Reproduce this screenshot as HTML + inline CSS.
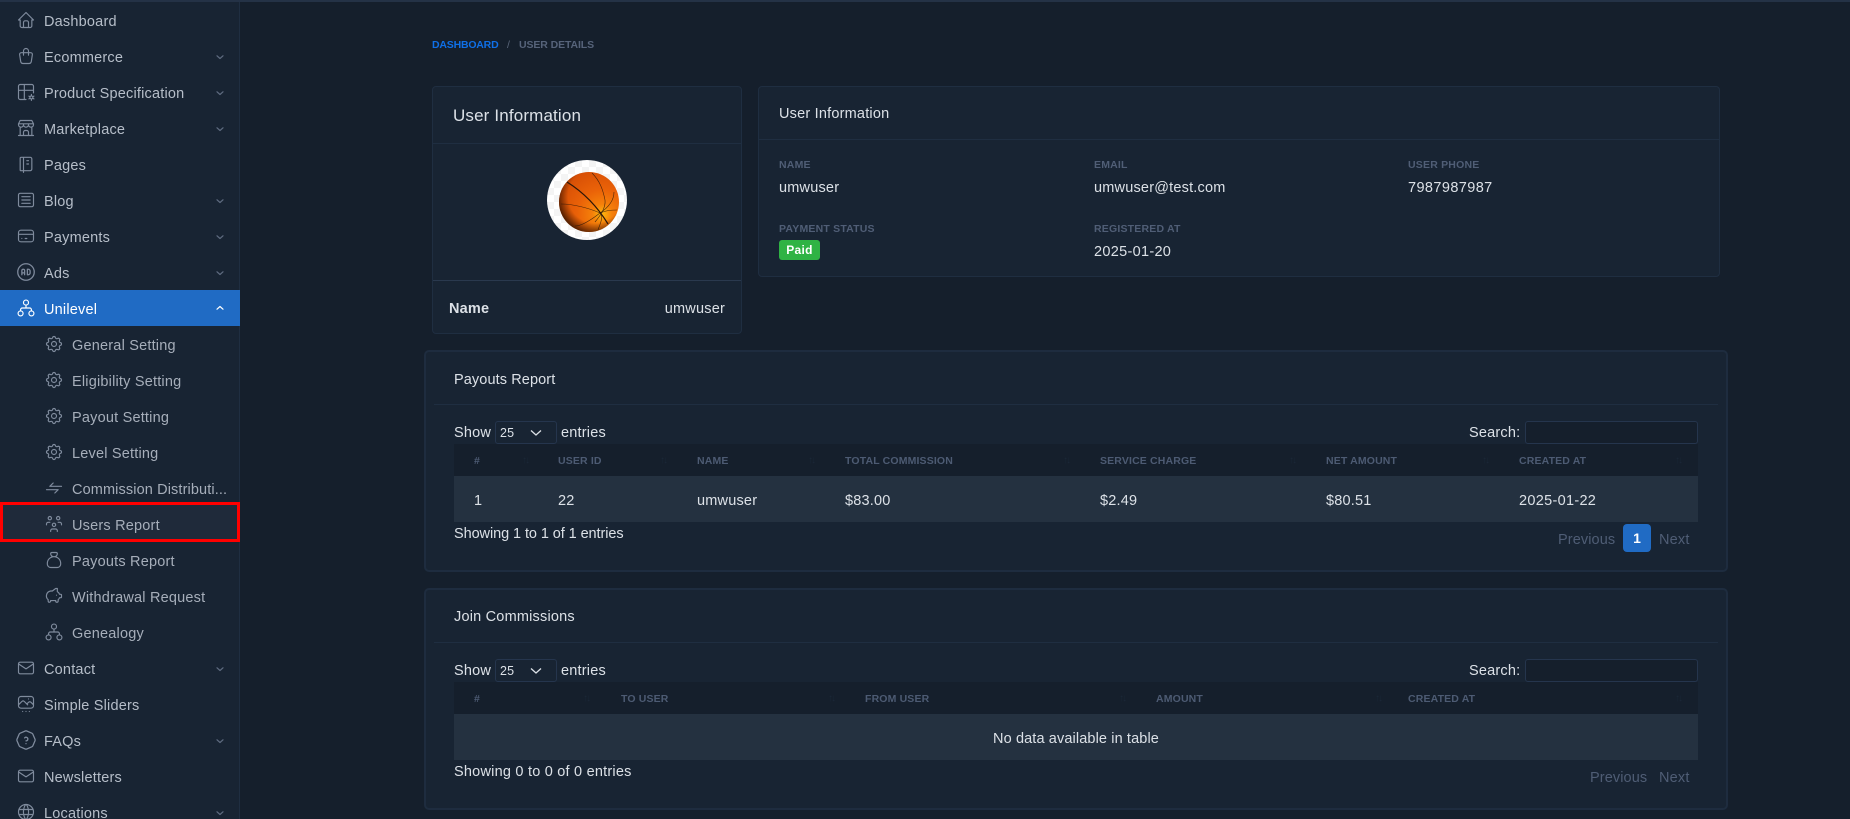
<!DOCTYPE html>
<html lang="en"><head><meta charset="utf-8"><title>User Details</title>
<style>
*{box-sizing:border-box;margin:0;padding:0}
html,body{width:1850px;height:819px;overflow:hidden;background:#151f2c}
body{font-family:"Liberation Sans",sans-serif;color:#dce1e7;font-size:14.5px;position:relative}
.a{position:absolute}
.t{position:absolute;white-space:nowrap;line-height:20px;height:20px;letter-spacing:.2px;margin-top:1px}
.side{position:absolute;left:0;top:0;width:240px;height:819px;background:#182433;border-right:1px solid #1f2e41}
.m{color:#b6bec9}.s{color:#a6aeba}
.ic{position:absolute;width:20px;height:20px;fill:none;stroke:#7f8b9d;stroke-width:1.4;stroke-linecap:round;stroke-linejoin:round}
.ch{position:absolute;left:215px;width:10px;height:10px;fill:none;stroke:#5e6b80;stroke-width:1.2;stroke-linecap:round;stroke-linejoin:round}
.card{position:absolute;background:#182433;border:1px solid #1f2e41;border-radius:4px}
.big{position:absolute;background:#182433;border:2px solid #1e2c3f;border-radius:5px}
.line{position:absolute;height:1px;background:#1f2e41}
.lab{position:absolute;white-space:nowrap;font-size:10.5px;line-height:14px;font-weight:bold;color:#505e76;letter-spacing:.2px;margin-top:1px}
.th{position:absolute;white-space:nowrap;font-size:10.5px;line-height:14px;font-weight:bold;color:#4d5b73;letter-spacing:.15px;margin-top:1px}
.so{position:absolute;white-space:nowrap;font-size:10px;line-height:14px;color:#1c2838;letter-spacing:-2px;margin-top:1px}
.box{position:absolute;border:1px solid #25354d;border-radius:3px}
.mut{color:#4f5d75}
</style></head><body>
<svg width="0" height="0" style="position:absolute"><defs>
<symbol id="gear" viewBox="0 0 24 24"><path d="M10.325 4.317c.426-1.756 2.924-1.756 3.35 0a1.724 1.724 0 0 0 2.573 1.066c1.543-.94 3.31.826 2.37 2.37a1.724 1.724 0 0 0 1.065 2.572c1.756.426 1.756 2.924 0 3.35a1.724 1.724 0 0 0-1.066 2.573c.94 1.543-.826 3.31-2.37 2.37a1.724 1.724 0 0 0-2.572 1.065c-.426 1.756-2.924 1.756-3.35 0a1.724 1.724 0 0 0-2.573-1.066c-1.543.94-3.31-.826-2.37-2.37a1.724 1.724 0 0 0-1.065-2.572c-1.756-.426-1.756-2.924 0-3.35a1.724 1.724 0 0 0 1.066-2.573c-.94-1.543.826-3.31 2.37-2.37c1 .608 2.296.07 2.572-1.065z"/><circle cx="12" cy="12" r="3"/></symbol>
<symbol id="down" viewBox="0 0 10 10"><path d="M2 3.800L5 6.500L8 3.800"/></symbol>
<symbol id="tree" viewBox="0 0 24 24"><circle cx="12" cy="5.500" r="3"/><circle cx="5.500" cy="18.500" r="3"/><circle cx="18.500" cy="18.500" r="3"/><path d="M12 8.500V12M5.500 15.500V14a2 2 0 0 1 2-2h9a2 2 0 0 1 2 2v1.500"/></symbol>
<symbol id="mail" viewBox="0 0 24 24"><path d="M3 7a2 2 0 0 1 2-2h14a2 2 0 0 1 2 2v10a2 2 0 0 1-2 2H5a2 2 0 0 1-2-2V7zM3 7l9 6l9-6"/></symbol>
</defs></svg>

<div class="a" style="left:0;top:0;width:1850px;height:2px;background:#243246;z-index:5"></div>

<div class="side">
<svg class="ic" style="left:16px;top:10px" viewBox="0 0 24 24"><path d="M5 12H3l9-9l9 9h-2M5 12v7a2 2 0 0 0 2 2h10a2 2 0 0 0 2-2v-7M9 21v-6a2 2 0 0 1 2-2h2a2 2 0 0 1 2 2v6"/></svg><div class="t m" style="left:44px;top:11px">Dashboard</div>
<svg class="ic" style="left:16px;top:46px" viewBox="0 0 24 24"><path d="M6.331 8H17.67a2 2 0 0 1 1.977 2.304l-1.255 8.152A3 3 0 0 1 15.426 21H8.574a3 3 0 0 1-2.965-2.544l-1.255-8.152A2 2 0 0 1 6.331 8zM9 11V6a3 3 0 0 1 6 0v5"/></svg><div class="t m" style="left:44px;top:47px">Ecommerce</div><svg class="ch" style="top:52px"><use href="#down"/></svg>
<svg class="ic" style="left:16px;top:82px" viewBox="0 0 24 24"><path d="M12 21H5a2 2 0 0 1-2-2V5a2 2 0 0 1 2-2h14a2 2 0 0 1 2 2v8M3 10h18M10 3v18"/><circle cx="18.500" cy="18.500" r="1.800"/><path d="M18.500 15v1.500M18.500 20.500V22M15.500 17l1.300.8M20.200 19.500l1.300.8M15.500 20.200l1.300-.8M20.200 17.700l1.300-.8"/></svg><div class="t m" style="left:44px;top:83px">Product Specification</div><svg class="ch" style="top:88px"><use href="#down"/></svg>
<svg class="ic" style="left:16px;top:118px" viewBox="0 0 24 24"><path d="M3 21h18M3 7v1a3 3 0 0 0 6 0V7m0 1a3 3 0 0 0 6 0V7m0 1a3 3 0 0 0 6 0V7H3l2-4h14l2 4M5 21V10.850M19 21V10.850M9 21v-4a2 2 0 0 1 2-2h2a2 2 0 0 1 2 2v4"/></svg><div class="t m" style="left:44px;top:119px">Marketplace</div><svg class="ch" style="top:124px"><use href="#down"/></svg>
<svg class="ic" style="left:16px;top:154px" viewBox="0 0 24 24"><path d="M6 4h11a2 2 0 0 1 2 2v12a2 2 0 0 1-2 2H6a1 1 0 0 1-1-1V5a1 1 0 0 1 1-1M9 4v18M13 8h2M13 12h2"/></svg><div class="t m" style="left:44px;top:155px">Pages</div>
<svg class="ic" style="left:16px;top:190px" viewBox="0 0 24 24"><path d="M5 4h14a2 2 0 0 1 2 2v12a2 2 0 0 1-2 2H5a2 2 0 0 1-2-2V6a2 2 0 0 1 2-2zM7 8h10M7 12h10M7 16h10"/></svg><div class="t m" style="left:44px;top:191px">Blog</div><svg class="ch" style="top:196px"><use href="#down"/></svg>
<svg class="ic" style="left:16px;top:226px" viewBox="0 0 24 24"><path d="M6 5h12a3 3 0 0 1 3 3v8a3 3 0 0 1-3 3H6a3 3 0 0 1-3-3V8a3 3 0 0 1 3-3zM3 10h18M7 15h.01M11 15h2"/></svg><div class="t m" style="left:44px;top:227px">Payments</div><svg class="ch" style="top:232px"><use href="#down"/></svg>
<svg class="ic" style="left:15px;top:261px;width:22px;height:22px" viewBox="0 0 24 24"><circle cx="12" cy="12" r="9"/><path d="M7.500 15v-4.500a1.500 1.500 0 0 1 3 0V15M7.500 13h3M13.500 9v6h1a2 2 0 0 0 2-2v-2a2 2 0 0 0-2-2z"/></svg><div class="t m" style="left:44px;top:263px">Ads</div><svg class="ch" style="top:268px"><use href="#down"/></svg>

<div class="a" style="left:0;top:290px;width:240px;height:36px;background:#206bc4"></div>
<svg class="ic" style="left:16px;top:298px;stroke:#fff" viewBox="0 0 24 24"><use href="#tree"/></svg><div class="t" style="left:44px;top:299px;color:#fff">Unilevel</div><svg class="ch" style="top:303px;stroke:#fff;transform:rotate(180deg)"><use href="#down"/></svg>

<svg class="ic" style="left:44px;top:334px" viewBox="0 0 24 24"><use href="#gear"/></svg><div class="t s" style="left:72px;top:335px">General Setting</div>
<svg class="ic" style="left:44px;top:370px" viewBox="0 0 24 24"><use href="#gear"/></svg><div class="t s" style="left:72px;top:371px">Eligibility Setting</div>
<svg class="ic" style="left:44px;top:406px" viewBox="0 0 24 24"><use href="#gear"/></svg><div class="t s" style="left:72px;top:407px">Payout Setting</div>
<svg class="ic" style="left:44px;top:442px" viewBox="0 0 24 24"><use href="#gear"/></svg><div class="t s" style="left:72px;top:443px">Level Setting</div>
<svg class="ic" style="left:44px;top:478px" viewBox="0 0 24 24"><path d="M21 10H7l4-4M3 14h14l-4 4"/></svg><div class="t s" style="left:72px;top:479px;letter-spacing:.12px">Commission Distributi...</div>

<div class="a" style="left:0;top:502px;width:240px;height:40px;background:#1f2a3a;border:3px solid #f00"></div>
<svg class="ic" style="left:44px;top:514px" viewBox="0 0 24 24"><path d="M10 13a2 2 0 1 0 4 0a2 2 0 0 0-4 0M8 21v-1a2 2 0 0 1 2-2h4a2 2 0 0 1 2 2v1M15 5a2 2 0 1 0 4 0a2 2 0 0 0-4 0M17 10h2a2 2 0 0 1 2 2v1M5 5a2 2 0 1 0 4 0a2 2 0 0 0-4 0M3 13v-1a2 2 0 0 1 2-2h2"/></svg><div class="t s" style="left:72px;top:515px">Users Report</div>
<svg class="ic" style="left:44px;top:550px" viewBox="0 0 24 24"><path d="M9.500 3h5a1.500 1.500 0 0 1 1.500 1.500a3.500 3.500 0 0 1-3.500 3.500h-1a3.500 3.500 0 0 1-3.500-3.500a1.500 1.500 0 0 1 1.500-1.500zM4 17v-1a8 8 0 1 1 16 0v1a4 4 0 0 1-4 4H8a4 4 0 0 1-4-4z"/></svg><div class="t s" style="left:72px;top:551px">Payouts Report</div>
<svg class="ic" style="left:44px;top:586px" viewBox="0 0 24 24"><path d="M15 11v.01M16 3v3.803a6.019 6.019 0 0 1 2.658 3.197h1.341a1 1 0 0 1 1 1v2a1 1 0 0 1-1 1h-1.342a6.008 6.008 0 0 1-1.658 2.473v1.527a1.500 1.500 0 0 1-3 0v-.583a6.040 6.040 0 0 1-1 .083h-4a6.040 6.040 0 0 1-1-.083v.583a1.500 1.500 0 0 1-3 0v-1.528a6 6 0 0 1 2.999-10.472h2.001l4-3z"/></svg><div class="t s" style="left:72px;top:587px">Withdrawal Request</div>
<svg class="ic" style="left:44px;top:622px" viewBox="0 0 24 24"><use href="#tree"/></svg><div class="t s" style="left:72px;top:623px">Genealogy</div>

<svg class="ic" style="left:16px;top:658px" viewBox="0 0 24 24"><use href="#mail"/></svg><div class="t m" style="left:44px;top:659px">Contact</div><svg class="ch" style="top:664px"><use href="#down"/></svg>
<svg class="ic" style="left:16px;top:694px" viewBox="0 0 24 24"><path d="M15 6h.01M6 3h12a3 3 0 0 1 3 3v8a3 3 0 0 1-3 3H6a3 3 0 0 1-3-3V6a3 3 0 0 1 3-3zM3 13l4-4a3 5 0 0 1 3 0l4 4M13 12l2-2a3 5 0 0 1 3 0l3 3M8 21h.01M12 21h.01M16 21h.01"/></svg><div class="t m" style="left:44px;top:695px">Simple Sliders</div>
<svg class="ic" style="left:15px;top:729px;width:22px;height:22px" viewBox="0 0 24 24"><path d="M12.802 2.165l5.575 2.389c.48.206.863.589 1.07 1.07l2.388 5.574c.22.512.22 1.092 0 1.604l-2.389 5.575c-.206.48-.589.863-1.07 1.07l-5.574 2.388c-.512.22-1.092.22-1.604 0l-5.575-2.389a2.036 2.036 0 0 1-1.07-1.07l-2.388-5.574a2.036 2.036 0 0 1 0-1.604l2.389-5.575c.206-.48.589-.863 1.07-1.07l5.574-2.388a2.036 2.036 0 0 1 1.604 0zM12 16v.01M12 13a2 2 0 0 0 .914-3.782a1.980 1.980 0 0 0-2.414.483"/></svg><div class="t m" style="left:44px;top:731px">FAQs</div><svg class="ch" style="top:736px"><use href="#down"/></svg>
<svg class="ic" style="left:16px;top:766px" viewBox="0 0 24 24"><use href="#mail"/></svg><div class="t m" style="left:44px;top:767px">Newsletters</div>
<svg class="ic" style="left:16px;top:802px" viewBox="0 0 24 24"><circle cx="12" cy="12" r="9"/><path d="M3.600 9h16.800M3.600 15h16.800M11.500 3a17 17 0 0 0 0 18M12.500 3a17 17 0 0 1 0 18"/></svg><div class="t m" style="left:44px;top:803px">Locations</div><svg class="ch" style="top:808px"><use href="#down"/></svg>
</div>

<div class="a" style="left:432px;top:38px;font-size:10.5px;line-height:14px;font-weight:bold;color:#0f6fe6;letter-spacing:-.2px;white-space:nowrap">DASHBOARD</div>
<div class="a" style="left:507px;top:38px;font-size:10.5px;line-height:14px;color:#5b677b">/</div>
<div class="a" style="left:519px;top:38px;font-size:10.5px;line-height:14px;font-weight:bold;color:#56637a;letter-spacing:-.1px;white-space:nowrap">USER DETAILS</div>

<!-- profile card -->
<div class="card" style="left:432px;top:86px;width:310px;height:248px"></div>
<div class="line" style="left:433px;top:143px;width:308px"></div>
<div class="t" style="left:453px;top:105px;font-size:17px;letter-spacing:.15px">User Information</div>
<div class="a" style="left:547px;top:160px;width:80px;height:80px;border-radius:50%;background:repeating-conic-gradient(#fff 0 25%,#f4f4f4 0 50%) 0 0/14px 14px"></div>
<svg class="a" style="left:559px;top:172px" width="60" height="60" viewBox="0 0 60 60">
<defs><radialGradient id="b" cx=".72" cy=".7" r=".75"><stop offset="0" stop-color="#fdb80e"/><stop offset=".22" stop-color="#f5800a"/><stop offset=".55" stop-color="#ea6208"/><stop offset="1" stop-color="#d85006"/></radialGradient>
<radialGradient id="d" cx=".6" cy=".4" r=".66"><stop offset=".68" stop-color="#3a1400" stop-opacity="0"/><stop offset="1" stop-color="#2a1000" stop-opacity=".9"/></radialGradient></defs>
<circle cx="30" cy="30" r="30" fill="url(#b)"/><circle cx="30" cy="30" r="30" fill="url(#d)"/>
<g fill="none" stroke="#2b1608" stroke-width=".6" stroke-opacity=".85"><path d="M8 10C24 20 38 34 49 52" stroke-width="1.200" stroke-opacity="1"/><path d="M33 1C41 9 44 18 46 28C47 36 41 44 36 50"/><path d="M55 20C55 28 50 35 41 41C32 48 22 54 16 54"/><path d="M2 32C14 32 30 36 41 41C45 46 40 54 39 58"/><path d="M41 41C48 38 53 38 58 38"/></g></svg>
<div class="a" style="left:433px;top:280px;width:308px;height:1px;background:#2a394e"></div>
<div class="t" style="left:449px;top:298px;font-weight:bold;font-size:14.5px">Name</div>
<div class="t" style="right:1125px;top:298px">umwuser</div>

<!-- details -->
<div class="card" style="left:758px;top:86px;width:962px;height:191px"></div>
<div class="line" style="left:759px;top:139px;width:960px"></div>
<div class="t" style="left:779px;top:103px;font-size:14.500px">User Information</div>
<div class="lab" style="left:779px;top:157px">NAME</div><div class="t" style="left:779px;top:177px">umwuser</div>
<div class="lab" style="left:1094px;top:157px">EMAIL</div><div class="t" style="left:1094px;top:177px">umwuser@test.com</div>
<div class="lab" style="left:1408px;top:157px">USER PHONE</div><div class="t" style="left:1408px;top:177px;letter-spacing:.4px">7987987987</div>
<div class="lab" style="left:779px;top:221px">PAYMENT STATUS</div>
<div class="a" style="left:779px;top:240px;width:41px;height:20px;background:#2fb344;border-radius:3px;color:#fff;font-weight:bold;font-size:12px;line-height:20px;text-align:center;letter-spacing:.3px">Paid</div>
<div class="lab" style="left:1094px;top:221px">REGISTERED AT</div><div class="t" style="left:1094px;top:241px;letter-spacing:.3px">2025-01-20</div>

<!-- payouts -->
<div class="big" style="left:424px;top:350px;width:1304px;height:222px"></div>
<div class="line" style="left:434px;top:404px;width:1284px"></div>
<div class="t" style="left:454px;top:369px;letter-spacing:.1px">Payouts Report</div>
<div class="t" style="left:454px;top:422px">Show</div>
<div class="box" style="left:495px;top:421px;width:62px;height:23px"></div>
<div class="t" style="left:500px;top:422px;font-size:12.500px">25</div>
<svg class="a" style="left:530px;top:427px;fill:none;stroke:#dce1e7;stroke-width:1.300" width="12" height="12" viewBox="0 0 12 12"><path d="M1 3.500L6 8L11 3.500"/></svg>
<div class="t" style="left:561px;top:422px">entries</div>
<div class="t" style="left:1469px;top:422px">Search:</div>
<div class="box" style="left:1525px;top:421px;width:173px;height:23px;background:#151f2c"></div>
<div class="a" style="left:454px;top:444px;width:1244px;height:32px;background:#151f2c"></div>
<div class="th" style="left:474px;top:453px">#</div>
<div class="th" style="left:558px;top:453px">USER ID</div>
<div class="th" style="left:697px;top:453px">NAME</div>
<div class="th" style="left:845px;top:453px">TOTAL COMMISSION</div>
<div class="th" style="left:1100px;top:453px">SERVICE CHARGE</div>
<div class="th" style="left:1326px;top:453px">NET AMOUNT</div>
<div class="th" style="left:1519px;top:453px">CREATED AT</div>
<div class="so" style="left:522px;top:453px">↑↓</div><div class="so" style="left:660px;top:453px">↑↓</div><div class="so" style="left:808px;top:453px">↑↓</div><div class="so" style="left:1063px;top:453px">↑↓</div><div class="so" style="left:1289px;top:453px">↑↓</div><div class="so" style="left:1482px;top:453px">↑↓</div><div class="so" style="left:1675px;top:453px">↑↓</div>
<div class="a" style="left:454px;top:476px;width:1244px;height:46px;background:#243140"></div>
<div class="t" style="left:474px;top:490px">1</div>
<div class="t" style="left:558px;top:490px">22</div>
<div class="t" style="left:697px;top:490px">umwuser</div>
<div class="t" style="left:845px;top:490px">$83.00</div>
<div class="t" style="left:1100px;top:490px">$2.49</div>
<div class="t" style="left:1326px;top:490px">$80.51</div>
<div class="t" style="left:1519px;top:490px;letter-spacing:.3px">2025-01-22</div>
<div class="t" style="left:454px;top:523px;letter-spacing:-.08px">Showing 1 to 1 of 1 entries</div>
<div class="t mut" style="left:1558px;top:529px;letter-spacing:.1px">Previous</div>
<div class="a" style="left:1623px;top:524px;width:28px;height:28px;background:#206bc4;border-radius:4px;color:#fff;text-align:center;line-height:29px;font-weight:bold;font-size:14px">1</div>
<div class="t mut" style="left:1659px;top:529px">Next</div>

<!-- join -->
<div class="big" style="left:424px;top:588px;width:1304px;height:222px"></div>
<div class="line" style="left:434px;top:642px;width:1284px"></div>
<div class="t" style="left:454px;top:606px">Join Commissions</div>
<div class="t" style="left:454px;top:660px">Show</div>
<div class="box" style="left:495px;top:659px;width:62px;height:23px"></div>
<div class="t" style="left:500px;top:660px;font-size:12.500px">25</div>
<svg class="a" style="left:530px;top:665px;fill:none;stroke:#dce1e7;stroke-width:1.300" width="12" height="12" viewBox="0 0 12 12"><path d="M1 3.500L6 8L11 3.500"/></svg>
<div class="t" style="left:561px;top:660px">entries</div>
<div class="t" style="left:1469px;top:660px">Search:</div>
<div class="box" style="left:1525px;top:659px;width:173px;height:23px;background:#151f2c"></div>
<div class="a" style="left:454px;top:682px;width:1244px;height:32px;background:#151f2c"></div>
<div class="th" style="left:474px;top:691px">#</div>
<div class="th" style="left:621px;top:691px">TO USER</div>
<div class="th" style="left:865px;top:691px">FROM USER</div>
<div class="th" style="left:1156px;top:691px">AMOUNT</div>
<div class="th" style="left:1408px;top:691px">CREATED AT</div>
<div class="so" style="left:583px;top:691px">↑↓</div><div class="so" style="left:828px;top:691px">↑↓</div><div class="so" style="left:1119px;top:691px">↑↓</div><div class="so" style="left:1375px;top:691px">↑↓</div><div class="so" style="left:1675px;top:691px">↑↓</div>
<div class="a" style="left:454px;top:714px;width:1244px;height:46px;background:#243140"></div>
<div class="t" style="left:454px;width:1244px;text-align:center;top:728px;letter-spacing:.12px">No data available in table</div>
<div class="t" style="left:454px;top:761px;letter-spacing:.22px">Showing 0 to 0 of 0 entries</div>
<div class="t mut" style="left:1590px;top:767px;letter-spacing:.1px">Previous</div>
<div class="t mut" style="left:1659px;top:767px">Next</div>
</body></html>
